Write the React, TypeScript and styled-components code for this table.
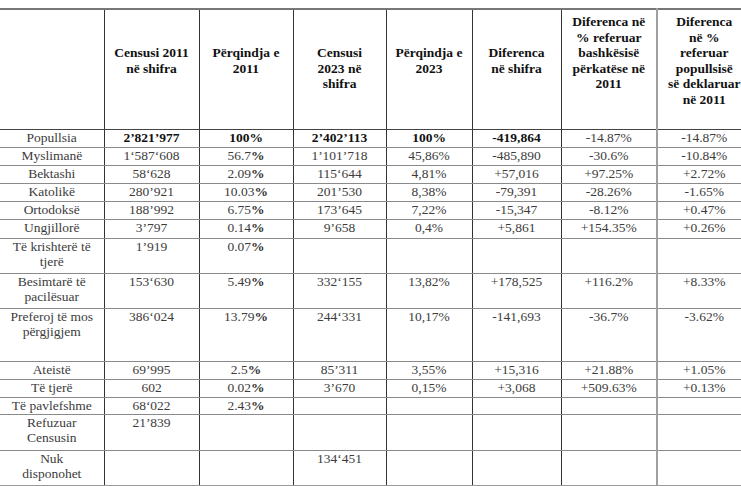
import React from "react";
import styled, { createGlobalStyle } from "styled-components";

const GlobalStyle = createGlobalStyle`
  html, body { margin: 0; padding: 0; background: #ffffff; overflow: hidden; }
  #root { width: 741px; height: 486px; overflow: hidden; }
  table, th, td { font-family: "Liberation Serif", "Times New Roman", serif; }
`;

const Page = styled.div`
  padding-top: 8px;
  width: 741px;
  overflow: hidden;
`;

const Table = styled.table`
  border-collapse: collapse;
  table-layout: fixed;
  width: 751px;
  border-top: 2px solid #777777;
  font-family: "Liberation Serif", "Times New Roman", serif;
`;

const HeadRow = styled.tr`
  height: 120px;
`;

const Row = styled.tr<{ $h: number }>`
  height: ${(p) => p.$h}px;
`;

const HeadCell = styled.th<{ $lead?: number; $grey?: boolean }>`
  vertical-align: top;
  text-align: center;
  font-family: "Liberation Serif", "Times New Roman", serif;
  font-weight: bold;
  font-size: 13.5px;
  line-height: 15.6px;
  color: #111111;
  padding: ${(p) => 4 + (p.$lead ?? 0) * 15.6}px 2px 0;
  border-right: ${(p) => (p.$grey ? "2px solid #a0a0a0" : "1px solid #333333")};
  border-bottom: 1px solid #444444;
`;

const Cell = styled.td<{ $bold?: boolean; $grey?: boolean }>`
  vertical-align: top;
  text-align: center;
  font-family: "Liberation Serif", "Times New Roman", serif;
  font-size: 13.5px;
  line-height: 15.5px;
  padding: 0 2px;
  color: ${(p) => (p.$bold ? "#111111" : "#3c3c3c")};
  font-weight: ${(p) => (p.$bold ? "bold" : "normal")};
  border-right: ${(p) => (p.$grey ? "2px solid #a0a0a0" : "1px solid #333333")};
  border-bottom: 1px solid #8a8a8a;
  white-space: nowrap;
`;

const LastRow = styled(Row)`
  & > td { border-bottom: 2px solid #999999; }
`;

const Pct = styled.b`
  font-weight: bold;
  color: #333333;
`;

const widths = [104, 95, 94, 93, 86, 89, 96, 94];

type RowData = {
  h: number;
  label: React.ReactNode;
  cells: React.ReactNode[];
  bold?: boolean;
};

const pct = (v: string) => (
  <>
    {v}
    <Pct>%</Pct>
  </>
);

const rows: RowData[] = [
  { h: 18, label: "Popullsia", bold: true, cells: ["2’821’977", "100%", "2’402’113", "100%", "-419,864", "-14.87%", "-14.87%"] },
  { h: 18, label: "Myslimanë", cells: ["1‘587‘608", pct("56.7"), "1’101’718", "45,86%", "-485,890", "-30.6%", "-10.84%"] },
  { h: 18, label: "Bektashi", cells: ["58‘628", pct("2.09"), "115‘644", "4,81%", "+57,016", "+97.25%", "+2.72%"] },
  { h: 18, label: "Katolikë", cells: ["280’921", pct("10.03"), "201’530", "8,38%", "-79,391", "-28.26%", "-1.65%"] },
  { h: 18, label: "Ortodoksë", cells: ["188’992", pct("6.75"), "173’645", "7,22%", "-15,347", "-8.12%", "+0.47%"] },
  { h: 19, label: "Ungjillorë", cells: ["3’797", pct("0.14"), "9’658", "0,4%", "+5,861", "+154.35%", "+0.26%"] },
  { h: 35, label: <>Të krishterë të<br />tjerë</>, cells: ["1’919", pct("0.07"), "", "", "", "", ""] },
  { h: 35, label: <>Besimtarë të<br />pacilësuar</>, cells: ["153‘630", pct("5.49"), "332‘155", "13,82%", "+178,525", "+116.2%", "+8.33%"] },
  { h: 53, label: <>Preferoj të mos<br />përgjigjem</>, cells: ["386‘024", pct("13.79"), "244‘331", "10,17%", "-141,693", "-36.7%", "-3.62%"] },
  { h: 18, label: "Ateistë", cells: ["69’995", pct("2.5"), "85’311", "3,55%", "+15,316", "+21.88%", "+1.05%"] },
  { h: 18, label: "Të tjerë", cells: ["602", pct("0.02"), "3’670", "0,15%", "+3,068", "+509.63%", "+0.13%"] },
  { h: 17, label: "Të pavlefshme", cells: ["68‘022", pct("2.43"), "", "", "", "", ""] },
  { h: 36, label: <>Refuzuar<br />Censusin</>, cells: ["21’839", "", "", "", "", "", ""] },
  { h: 36, label: <>Nuk<br />disponohet</>, cells: ["", "", "134‘451", "", "", "", ""] },
];

const headers: { text: React.ReactNode; lead: number }[] = [
  { text: "", lead: 0 },
  { text: <>Censusi 2011<br />në shifra</>, lead: 2 },
  { text: <>Përqindja e<br />2011</>, lead: 2 },
  { text: <>Censusi<br />2023 në<br />shifra</>, lead: 2 },
  { text: <>Përqindja e<br />2023</>, lead: 2 },
  { text: <>Diferenca<br />në shifra</>, lead: 2 },
  { text: <>Diferenca në<br />% referuar<br />bashkësisë<br />përkatëse në<br />2011</>, lead: 0 },
  { text: <>Diferenca<br />në %<br />referuar<br />popullsisë<br />së deklaruar<br />në 2011</>, lead: 0 },
];

export default function App() {
  return (
    <>
      <GlobalStyle />
      <Page>
        <Table>
          <colgroup>
            {widths.map((w, i) => (
              <col key={i} style={{ width: w }} />
            ))}
          </colgroup>
          <thead>
            <HeadRow>
              {headers.map((h, i) => (
                <HeadCell key={i} $lead={h.lead} $grey={i === 6}>
                  {h.text}
                </HeadCell>
              ))}
            </HeadRow>
          </thead>
          <tbody>
            {rows.map((r, ri) => {
              const RowComp = ri === rows.length - 1 ? LastRow : Row;
              return (
                <RowComp key={ri} $h={r.h}>
                  <Cell>{r.label}</Cell>
                  {r.cells.map((c, ci) => (
                    <Cell key={ci} $bold={r.bold && ci < 5} $grey={ci === 5}>
                      {c}
                    </Cell>
                  ))}
                </RowComp>
              );
            })}
          </tbody>
        </Table>
      </Page>
    </>
  );
}
